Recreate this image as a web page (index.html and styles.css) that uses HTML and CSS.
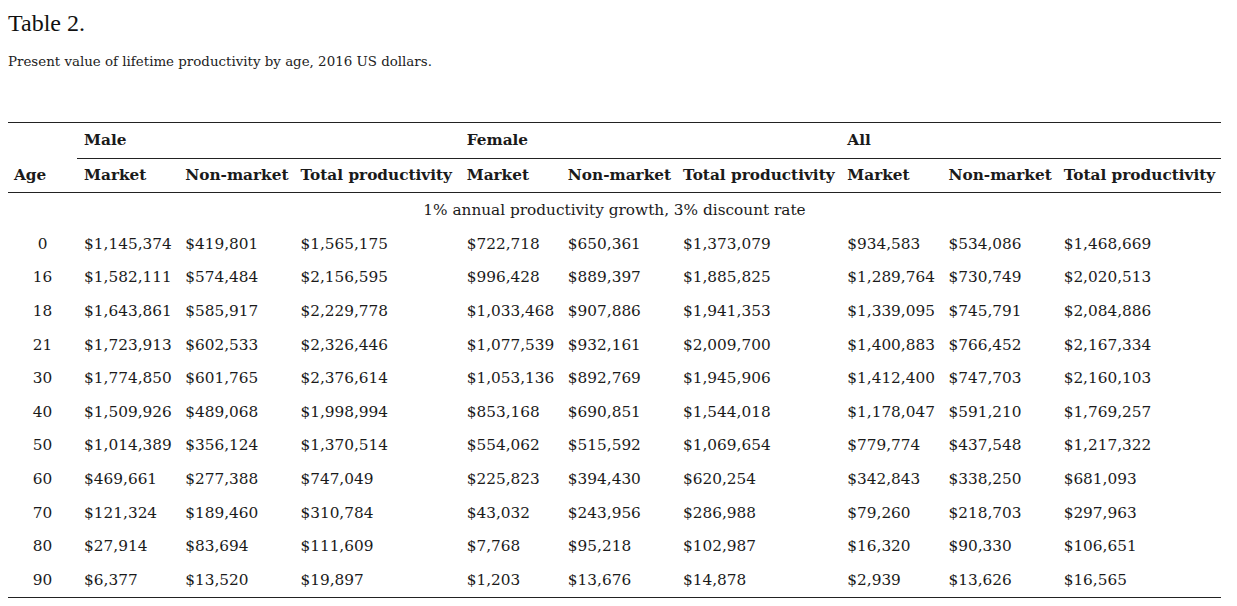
FILE: index.html
```html
<!DOCTYPE html>
<html>
<head>
<meta charset="utf-8">
<link rel="stylesheet" href="styles.css">
</head>
<body>
<h1 class="title">Table 2.</h1>
<p class="caption">Present value of lifetime productivity by age, 2016 US dollars.</p>
<table class="data">
<colgroup>
<col class="c-age"><col class="c-m"><col class="c-n"><col class="c-t1">
<col class="c-m"><col class="c-n"><col class="c-t2">
<col class="c-m"><col class="c-n"><col class="c-t2">
</colgroup>
<thead>
<tr class="grp">
<th rowspan="2" class="age-h">Age</th>
<th colspan="3" class="g">Male</th>
<th colspan="3" class="g">Female</th>
<th colspan="3" class="g">All</th>
</tr>
<tr class="sub">
<th>Market</th><th>Non-market</th><th>Total productivity</th>
<th>Market</th><th>Non-market</th><th>Total productivity</th>
<th>Market</th><th>Non-market</th><th>Total productivity</th>
</tr>
</thead>
<tbody>
<tr class="section"><td colspan="10">1% annual productivity growth, 3% discount rate</td></tr>
<tr><td class="age">0</td><td>$1,145,374</td><td>$419,801</td><td>$1,565,175</td><td>$722,718</td><td>$650,361</td><td>$1,373,079</td><td>$934,583</td><td>$534,086</td><td>$1,468,669</td></tr>
<tr><td class="age">16</td><td>$1,582,111</td><td>$574,484</td><td>$2,156,595</td><td>$996,428</td><td>$889,397</td><td>$1,885,825</td><td>$1,289,764</td><td>$730,749</td><td>$2,020,513</td></tr>
<tr><td class="age">18</td><td>$1,643,861</td><td>$585,917</td><td>$2,229,778</td><td>$1,033,468</td><td>$907,886</td><td>$1,941,353</td><td>$1,339,095</td><td>$745,791</td><td>$2,084,886</td></tr>
<tr><td class="age">21</td><td>$1,723,913</td><td>$602,533</td><td>$2,326,446</td><td>$1,077,539</td><td>$932,161</td><td>$2,009,700</td><td>$1,400,883</td><td>$766,452</td><td>$2,167,334</td></tr>
<tr><td class="age">30</td><td>$1,774,850</td><td>$601,765</td><td>$2,376,614</td><td>$1,053,136</td><td>$892,769</td><td>$1,945,906</td><td>$1,412,400</td><td>$747,703</td><td>$2,160,103</td></tr>
<tr><td class="age">40</td><td>$1,509,926</td><td>$489,068</td><td>$1,998,994</td><td>$853,168</td><td>$690,851</td><td>$1,544,018</td><td>$1,178,047</td><td>$591,210</td><td>$1,769,257</td></tr>
<tr><td class="age">50</td><td>$1,014,389</td><td>$356,124</td><td>$1,370,514</td><td>$554,062</td><td>$515,592</td><td>$1,069,654</td><td>$779,774</td><td>$437,548</td><td>$1,217,322</td></tr>
<tr><td class="age">60</td><td>$469,661</td><td>$277,388</td><td>$747,049</td><td>$225,823</td><td>$394,430</td><td>$620,254</td><td>$342,843</td><td>$338,250</td><td>$681,093</td></tr>
<tr><td class="age">70</td><td>$121,324</td><td>$189,460</td><td>$310,784</td><td>$43,032</td><td>$243,956</td><td>$286,988</td><td>$79,260</td><td>$218,703</td><td>$297,963</td></tr>
<tr><td class="age">80</td><td>$27,914</td><td>$83,694</td><td>$111,609</td><td>$7,768</td><td>$95,218</td><td>$102,987</td><td>$16,320</td><td>$90,330</td><td>$106,651</td></tr>
<tr><td class="age">90</td><td>$6,377</td><td>$13,520</td><td>$19,897</td><td>$1,203</td><td>$13,676</td><td>$14,878</td><td>$2,939</td><td>$13,626</td><td>$16,565</td></tr>
</tbody>
</table>
</body>
</html>
```
FILE: styles.css
```css
body {
  margin: 0;
  padding: 0 8px;
  background: #fff;
  color: #1a1a1a;
  font-family: "DejaVu Serif", serif;
}
.title {
  margin: 8px 0 0;
  font-family: "Liberation Serif", serif;
  font-weight: normal;
  font-size: 24px;
  line-height: 30px;
  color: #111;
}
.caption {
  margin: 15px 0 0;
  font-size: 13.4px;
  line-height: 18px;
  color: #222;
}
.data {
  margin-top: 51px;
  width: 1213px;
  table-layout: fixed;
  border-collapse: collapse;
  font-size: 15.3px;
}
.c-age { width: 69px; }
.c-m { width: 101px; }
.c-n { width: 115px; }
.c-t1 { width: 166px; }
.c-t2 { width: 164px; }
.data thead {
  border-top: 1px solid #222;
  border-bottom: 1px solid #222;
}
.data th {
  text-align: left;
  font-weight: bold;
  padding: 0 7px;
  white-space: nowrap;
}
.grp th { height: 34px; padding-top: 0; }
.grp th.g { border-bottom: 1px solid #222; }
.sub th { height: 33px; }
.data th.age-h { padding-left: 6px; padding-top: 35px; }
.data td {
  height: 33.6px;
  padding: 0 7px;
  white-space: nowrap;
}
.data td.age { text-align: center; padding: 0; }
.section td { text-align: center; height: 34px; }
.data tbody { border-bottom: 1px solid #222; }
```
